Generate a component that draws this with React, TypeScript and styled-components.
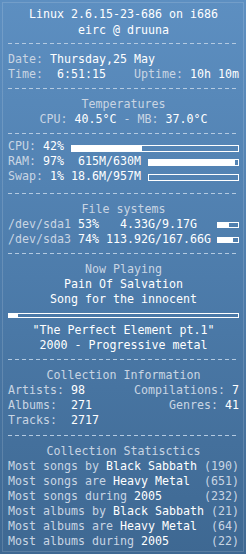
import React from 'react';
import styled, { createGlobalStyle } from 'styled-components';

const colors = {
    label: '#c9d5e3',
    value: '#ffffff',
    dash: '#b4cae1',
};

const GlobalStyle = createGlobalStyle`
    html, body {
        margin: 0;
        padding: 0;
        background: #3e6892;
    }
`;

const Panel = styled.div`
    box-sizing: border-box;
    width: 246px;
    height: 554px;
    padding: 7px 7px 0 8px;
    background: linear-gradient(180deg, #5d8fc1 0%, #4d7cab 50%, #3e6892 100%);
    outline: 1px solid rgba(255, 255, 255, 0.14);
    outline-offset: -3px;
    font-family: 'DejaVu Sans Mono', monospace;
    font-size: 11.63px;
    line-height: 15px;
    color: ${colors.label};
    overflow: hidden;
`;

const Section = styled.div<{ $top?: number }>`
    display: flex;
    flex-direction: column;
    margin-top: ${(p) => p.$top ?? 0}px;
`;

const Line = styled.div<{ $center?: boolean; $tall?: boolean }>`
    height: ${(p) => (p.$tall ? 16 : 15)}px;
    white-space: pre;
    text-align: ${(p) => (p.$center ? 'center' : 'left')};
`;

const SplitRow = styled.div`
    display: flex;
    justify-content: space-between;
    height: 15px;
    white-space: pre;
`;

const BarRow = styled.div`
    display: flex;
    align-items: center;
    height: 15px;
    white-space: pre;
`;

const Label = styled.span`
    color: ${colors.label};
`;

const Value = styled.span`
    color: ${colors.value};
`;

const Divider = styled.div<{ $top?: number; $bottom?: number }>`
    height: 1px;
    margin: ${(p) => p.$top ?? 6}px 0 ${(p) => p.$bottom ?? 8}px;
    background: repeating-linear-gradient(to right, ${colors.dash} 0 4px, transparent 4px 7px);
`;

const Bar = styled.div<{ $height: number; $width?: number; $shift?: number }>`
    box-sizing: border-box;
    flex: ${(p) => (p.$width ? `0 0 ${p.$width}px` : '1')};
    height: ${(p) => p.$height}px;
    margin-left: auto;
    margin-top: ${(p) => p.$shift ?? 0}px;
    border: 1px solid ${colors.value};
    display: flex;
`;

const Fill = styled.div`
    height: 100%;
    background: ${colors.value};
`;

const Meter = ({ pct, height, width, shift }: { pct: number; height: number; width?: number; shift?: number }) => (
    <Bar $height={height} $width={width} $shift={shift}>
        <Fill style={{ width: `${pct}%` }} />
    </Bar>
);

const Progress = styled(Bar)`
    flex: none;
    width: 100%;
    margin: 6px 0 5px;
`;

const stats = [
    { what: 'Most songs by ', who: 'Black Sabbath', n: 190 },
    { what: 'Most songs are ', who: 'Heavy Metal', n: 651 },
    { what: 'Most songs during ', who: '2005', n: 232 },
    { what: 'Most albums by ', who: 'Black Sabbath', n: 21 },
    { what: 'Most albums are ', who: 'Heavy Metal', n: 64 },
    { what: 'Most albums during ', who: '2005', n: 22 },
];

export default function App() {
    return (
        <>
            <GlobalStyle />
            <Panel>
                <Section>
                    <Line $center $tall>
                        <Value>Linux 2.6.15-23-686 on i686</Value>
                    </Line>
                    <Line $center>
                        <Value>eirc @ druuna</Value>
                    </Line>
                </Section>
                <Divider $top={5} />

                <Section>
                    <Line>
                        <Label>Date: </Label>
                        <Value>Thursday,25 May</Value>
                    </Line>
                    <SplitRow>
                        <span>
                            <Label>Time:  </Label>
                            <Value>6:51:15</Value>
                        </span>
                        <span>
                            <Label>Uptime: </Label>
                            <Value>10h 10m</Value>
                        </span>
                    </SplitRow>
                </Section>
                <Divider />

                <Section>
                    <Line $center>Temperatures</Line>
                    <Line $center>
                        <Label>CPU: </Label>
                        <Value>40.5°C</Value>
                        <Label> - MB: </Label>
                        <Value>37.0°C</Value>
                    </Line>
                </Section>
                <Divider $bottom={5} />

                <Section>
                    <BarRow>
                        <Label>CPU: </Label>
                        <Value>42% </Value>
                        <Meter pct={42} height={7} shift={3} />
                    </BarRow>
                    <BarRow>
                        <Label>RAM: </Label>
                        <Value>97%  615M/630M </Value>
                        <Meter pct={97} height={7} shift={2} />
                    </BarRow>
                    <BarRow>
                        <Label>Swap: </Label>
                        <Value>1% 18.6M/957M </Value>
                        <Meter pct={0} height={7} shift={2} />
                    </BarRow>
                </Section>
                <Divider $top={9} />

                <Section>
                    <Line $center>File systems</Line>
                    <BarRow>
                        <Label>/dev/sda1 </Label>
                        <Value>53%   4.33G/9.17G</Value>
                        <Meter pct={53} height={6} width={22} shift={1} />
                    </BarRow>
                    <BarRow>
                        <Label>/dev/sda3 </Label>
                        <Value>74% 113.92G/167.66G</Value>
                        <Meter pct={74} height={6} width={22} shift={1} />
                    </BarRow>
                </Section>
                <Divider />

                <Section>
                    <Line $center>Now Playing</Line>
                    <Line $center>
                        <Value>Pain Of Salvation</Value>
                    </Line>
                    <Line $center>
                        <Value>Song for the innocent</Value>
                    </Line>
                    <Progress $height={5}>
                        <Fill style={{ width: '4%' }} />
                    </Progress>
                    <Line $center>
                        <Value>"The Perfect Element pt.1"</Value>
                    </Line>
                    <Line $center>
                        <Value>2000 - Progressive metal</Value>
                    </Line>
                </Section>
                <Divider />

                <Section>
                    <Line $center>Collection Information</Line>
                    <SplitRow>
                        <span>
                            <Label>Artists: </Label>
                            <Value>98</Value>
                        </span>
                        <span>
                            <Label>Compilations: </Label>
                            <Value>7</Value>
                        </span>
                    </SplitRow>
                    <SplitRow>
                        <span>
                            <Label>Albums:  </Label>
                            <Value>271</Value>
                        </span>
                        <span>
                            <Label>Genres: </Label>
                            <Value>41</Value>
                        </span>
                    </SplitRow>
                    <Line>
                        <Label>Tracks:  </Label>
                        <Value>2717</Value>
                    </Line>
                </Section>
                <Divider $top={7} />

                <Section>
                    <Line $center>Collection Statisctics</Line>
                    {stats.map((s) => (
                        <SplitRow key={s.what}>
                            <span>
                                <Label>{s.what}</Label>
                                <Value>{s.who}</Value>
                            </span>
                            <Label>({s.n})</Label>
                        </SplitRow>
                    ))}
                </Section>
            </Panel>
        </>
    );
}
